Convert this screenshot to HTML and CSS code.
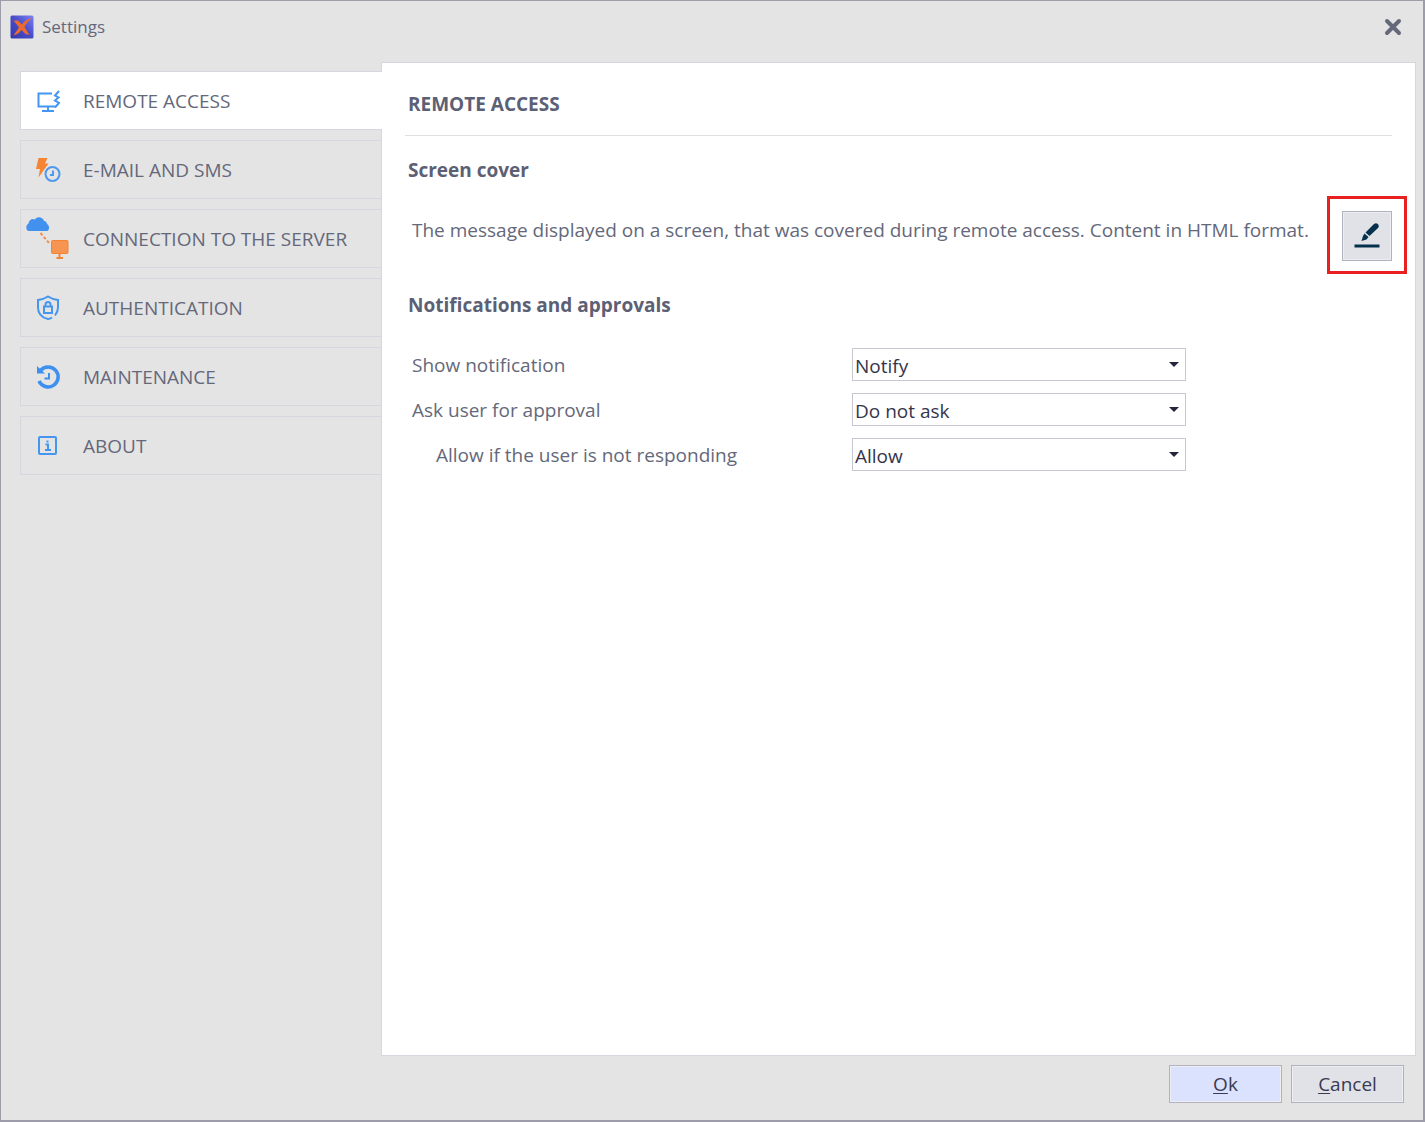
FILE: index.html
```
<!DOCTYPE html>
<html lang="en">
<head>
  <meta charset="UTF-8">
  <meta name="viewport" content="width=device-width, initial-scale=1.0">
  <title>Settings</title>
  <link rel="stylesheet" href="styles.css">
</head>
<body>

  <div class="window">
    <header class="title-bar">
      <svg class="app-icon" viewBox="0 0 24 24">
        <defs>
          <linearGradient id="appBg" x1="0" y1="1" x2="1" y2="0">
            <stop offset="0" stop-color="#3538a8" />
            <stop offset="0.5" stop-color="#474bc8" />
            <stop offset="1" stop-color="#7c84f2" />
          </linearGradient>
        </defs>
        <rect x="0.5" y="0.5" width="23" height="23" rx="1.5" fill="url(#appBg)" />
        <path d="M3.500 5.500 L8 5.500 L12 9.500 C14 6.500 17 4 21.500 3 C18.500 6 16 9 14.500 12 L19.500 20 L15.500 19 L11.500 15 C10 17 7.500 19.500 3.500 20.500 C5.500 17.500 7.500 15 9 12.300 Z" fill="#ea6a30" />
      </svg>
      <span class="window-title">Settings</span>
      <button class="close-button" type="button" aria-label="Close">
        <svg viewBox="0 0 20 20"><path d="M4 4 L16 16 M16 4 L4 16" /></svg>
      </button>
    </header>

    <div class="content">
      <nav class="tabs">
        <a href="#" class="tab tab-active">
          <svg class="tab-icon" viewBox="0 0 48 48" fill="none" stroke="#4596f2" stroke-width="2">
            <path d="M28 16.500 H14.500 V29.500 H31.500 M24 29.500 V34 M18 34 H30" />
            <path d="M35 14 L31 18.500 L34.500 20.500 L31 23.500 L35 26 L31 30.500" />
          </svg>
          <span>REMOTE ACCESS</span>
        </a>
        <a href="#" class="tab">
          <svg class="tab-icon" viewBox="0 0 48 48">
            <path d="M14.500 12 H23.500 L21 17.500 H24.500 L14.500 31.500 L16 23 H12 Z" fill="#f58434" />
            <circle cx="28.500" cy="28" r="7" fill="none" stroke="#4f98ef" stroke-width="2" />
            <path d="M29 24.500 V29 H26" fill="none" stroke="#4f98ef" stroke-width="2" />
          </svg>
          <span>E-MAIL AND SMS</span>
        </a>
        <a href="#" class="tab">
          <svg class="tab-icon" viewBox="0 0 48 48">
            <path d="M5 16 C1.500 16 1.500 10 4.500 8.500 C5 4.500 8.500 3 11 4.500 C13 1 19 2 20 6 C22 6 23 8 23 9 C26 10.500 25.500 16 23 16 Z" fill="#4391ef" />
            <path d="M16.500 18 L25.500 28.500" fill="none" stroke="#f58d4c" stroke-width="2" stroke-dasharray="3 2" />
            <rect x="27.500" y="25.500" width="16.500" height="13" rx="1" fill="#f69552" stroke="#f28434" />
            <path d="M35.500 39 V43 M32.500 43 H39" stroke="#f28434" stroke-width="2" />
          </svg>
          <span>CONNECTION TO THE SERVER</span>
        </a>
        <a href="#" class="tab">
          <svg class="tab-icon" viewBox="0 0 48 48" fill="none" stroke="#4596ef" stroke-width="2">
            <path d="M28 33.500 C26.500 34.500 25 35 24 35 C17 33.500 14 28.500 14 23.500 V16 C18 15.500 21 14.500 24 12.500 C27 14.500 30 15.500 34 16 V23.500 C34 26.500 33 29 31 31.500" />
            <rect x="20" y="22.500" width="8" height="6.500" />
            <path d="M21.500 22.500 V20.500 A2.500 2.500 0 0 1 26.500 20.500 V22.500" />
          </svg>
          <span>AUTHENTICATION</span>
        </a>
        <a href="#" class="tab">
          <svg class="tab-icon" viewBox="0 0 48 48" fill="none" stroke="#3d90ef">
            <path d="M16.500 17.500 A10 10 0 1 1 15 28" stroke-width="3.5" />
            <path d="M13 13 V20.500 H21 Z" fill="#3d90ef" stroke="none" />
            <path d="M25 20 V25.500 H20.500" stroke-width="2" />
          </svg>
          <span>MAINTENANCE</span>
        </a>
        <a href="#" class="tab">
          <svg class="tab-icon" viewBox="0 0 48 48" fill="none" stroke="#4596ef" stroke-width="2">
            <rect x="15" y="15" width="17" height="17" rx="1" />
            <path d="M21.500 22.500 H24 V28 M21 28 H27 M23.500 18.500 V20.500" />
          </svg>
          <span>ABOUT</span>
        </a>
      </nav>

      <main class="panel">
        <h1 class="panel-title">REMOTE ACCESS</h1>

        <h2 class="section-title">Screen cover</h2>
        <div class="message-row">
          <p class="message-text">The message displayed on a screen, that was covered during remote access. Content in HTML format.</p>
          <div class="highlight">
            <button class="edit-button" type="button" aria-label="Edit message">
              <svg viewBox="0 0 26 26" fill="#05304d">
                <path d="M11.500 9.500 L20 1 Q22 -0.500 23.800 1 Q25.500 3 24 5 L15.500 13 Z" />
                <path d="M10.500 10.500 L14.500 14 L12.500 16.500 L7.500 18 L9 13 Z" />
                <rect x="0.500" y="21.500" width="25" height="3" />
              </svg>
            </button>
          </div>
        </div>

        <h2 class="section-title">Notifications and approvals</h2>
        <form class="options">
          <div class="option-row">
            <label for="notification">Show notification</label>
            <div class="select-box">
              <select id="notification">
                <option>Notify</option>
              </select>
            </div>
          </div>
          <div class="option-row">
            <label for="approval">Ask user for approval</label>
            <div class="select-box">
              <select id="approval">
                <option>Do not ask</option>
              </select>
            </div>
          </div>
          <div class="option-row option-nested">
            <label for="noResponse">Allow if the user is not responding</label>
            <div class="select-box">
              <select id="noResponse">
                <option>Allow</option>
              </select>
            </div>
          </div>
        </form>
      </main>
    </div>

    <footer class="buttons">
      <button class="button button-primary" type="button"><u>O</u>k</button>
      <button class="button" type="button"><u>C</u>ancel</button>
    </footer>
  </div>

</body>
</html>
```
FILE: styles.css
```
* {
  margin: 0;
  padding: 0;
  box-sizing: border-box;
}

body {
  font-family: "Open Sans", "Noto Sans", sans-serif;
  font-size: 19px;
  line-height: 28px;
  color: #64687a;
  background-color: #e4e4e4;
}

button,
select {
  font: inherit;
}

.window {
  display: flex;
  flex-direction: column;
  min-height: 100vh;
  border: 1px solid #9c9cab;
  border-right-width: 2px;
  border-bottom-width: 2px;
}

.title-bar {
  display: flex;
  align-items: center;
  height: 52px;
  padding: 0 20px 0 9px;
}

.app-icon {
  width: 24px;
  height: 24px;
}

.window-title {
  flex: 1;
  margin-left: 8px;
  font-size: 17px;
}

.close-button {
  width: 20px;
  height: 20px;
  border: none;
  background: none;
  cursor: pointer;
}

.close-button svg {
  display: block;
  width: 20px;
  height: 20px;
  fill: none;
  stroke: #646879;
  stroke-width: 4;
  stroke-linecap: round;
}

.content {
  display: flex;
  flex: 1;
  padding: 9px 7px 0 19px;
}

.tabs {
  display: flex;
  flex-direction: column;
  gap: 10px;
  width: 361px;
  padding-top: 9px;
}

.tab {
  display: flex;
  align-items: center;
  gap: 11px;
  height: 59px;
  padding-left: 3px;
  border: 1px solid #d6d6de;
  border-right: none;
  color: inherit;
  text-decoration: none;
}

/* the active tab runs over the panel's left border */
.tab-active {
  position: relative;
  margin-right: -1px;
  background-color: #fff;
}

.tab-icon {
  width: 48px;
  height: 48px;
}

.panel {
  flex: 1;
  padding: 27px 23px 0;
  border: 1px solid #d6d6de;
  background-color: #fff;
}

.panel-title {
  padding: 0 3px 17px;
  border-bottom: 1px solid #e0e0e4;
  font-size: 19px;
  font-weight: 700;
  color: #5c6074;
}

.section-title {
  padding: 0 3px;
  margin-top: 20px;
  font-size: 19px;
  font-weight: 700;
  color: #5c6074;
}

.message-row {
  display: flex;
  justify-content: space-between;
  padding-left: 7px;
  margin: 27px 0 30px;
}

.message-text {
  padding-top: 5px;
}

.highlight {
  position: relative;
  flex: none;
}

.highlight::after {
  content: "";
  position: absolute;
  inset: -15px -15px -13px;
  border: 3px solid #e92020;
  pointer-events: none;
}

.edit-button {
  display: flex;
  align-items: center;
  justify-content: center;
  width: 50px;
  height: 50px;
  border: 1px solid #b0b3be;
  box-shadow: inset 0 0 0 1px #eeeef2;
  background-color: #e1e2e7;
  cursor: pointer;
}

.edit-button svg {
  width: 26px;
  height: 26px;
}

.options {
  display: flex;
  flex-direction: column;
  gap: 12px;
  margin-top: 29px;
  padding-left: 7px;
}

.option-row {
  display: flex;
  align-items: center;
  height: 33px;
}

.option-row label {
  width: 440px;
}

.option-nested label {
  padding-left: 24px;
}

.select-box {
  position: relative;
  width: 334px;
}

.select-box::after {
  content: "";
  position: absolute;
  top: 14px;
  right: 7px;
  border: 5px solid transparent;
  border-top-color: #24243a;
  border-bottom: none;
  pointer-events: none;
}

.select-box select {
  display: block;
  appearance: none;
  width: 100%;
  height: 33px;
  padding: 2px 24px 0 2px;
  border: 1px solid #c8c8d2;
  border-radius: 0;
  background-color: #fff;
  color: #35354c;
}

.buttons {
  display: flex;
  justify-content: flex-end;
  gap: 9px;
  padding: 9px 19px 17px;
}

.button {
  width: 113px;
  height: 38px;
  border: 1px solid #b0b3be;
  box-shadow: inset 0 0 0 1px #eeeef2;
  background-color: #e1e2e7;
  color: #3a3a52;
  cursor: pointer;
}

.button-primary {
  background-color: #dbe2fd;
}

.button u {
  text-underline-offset: 2px;
}
```
